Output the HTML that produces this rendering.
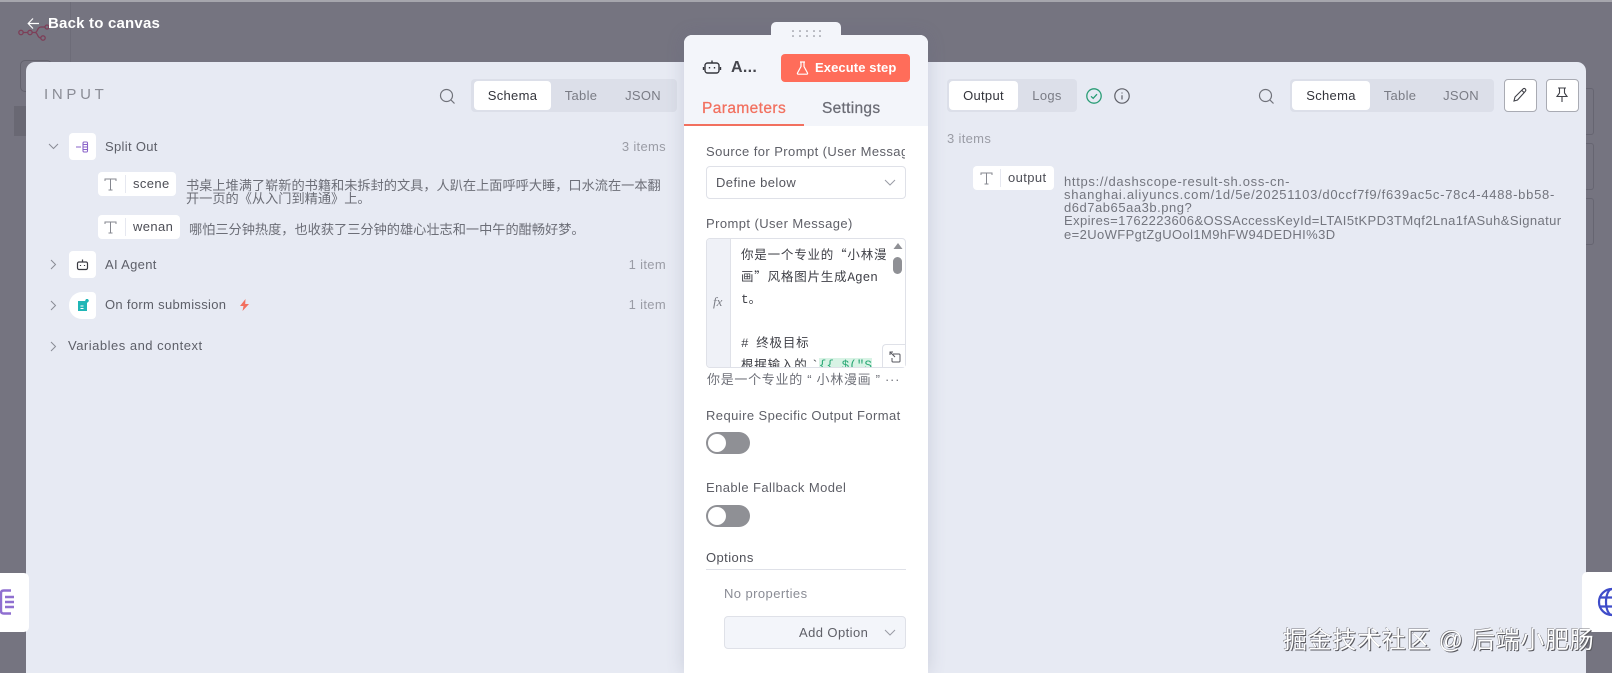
<!DOCTYPE html>
<html lang="zh">
<head>
<meta charset="utf-8">
<title>Back to canvas</title>
<style>
html,body{margin:0;padding:0;width:1612px;height:673px;overflow:hidden}
#r{width:1612px;height:673px;overflow:hidden;position:relative;background:#757480;font-family:"Liberation Sans","Noto Sans CJK SC",sans-serif;color:#6c6e77}
.a{position:absolute;white-space:nowrap}
.t{position:absolute;white-space:nowrap;line-height:16px;font-size:13px;letter-spacing:.32px}
svg{position:absolute;overflow:visible}
.seg{position:absolute;background:#dcdfe9;border-radius:4px;top:79px;height:33px}
.on{position:absolute;background:#fff;border-radius:4px;top:81px;height:29px;color:#33343b;font-size:13px;text-align:center;line-height:29px;letter-spacing:.3px}
.off{position:absolute;top:81px;height:29px;font-size:13px;text-align:center;line-height:29px;color:#7a7c85;letter-spacing:.3px}
.box{position:absolute;width:27px;height:27px;background:#fff;border-radius:4px}
.pill{position:absolute;background:#fff;border-radius:4px;height:24px}
.pill i{position:absolute;left:27px;top:3px;bottom:3px;width:1px;background:#e6e8f0}
.pill b{position:absolute;left:35px;top:4px;font-weight:normal;font-size:13px;letter-spacing:.4px;color:#4d4e56;line-height:16px}
.zh{position:absolute;font-size:13.2px;line-height:13px;color:#6c6e77;white-space:nowrap}
.mono{position:absolute;font-family:"Noto Sans CJK SC",monospace;font-size:12.5px;letter-spacing:.8px;line-height:22px;height:22px;color:#3f4047;white-space:nowrap}
.mono span{font-family:"Liberation Mono",monospace;letter-spacing:0;font-size:12.7px}
.lab{position:absolute;font-size:13px;line-height:16px;letter-spacing:.42px;color:#5f6068;white-space:nowrap}
.tog{position:absolute;left:706px;width:44px;height:22px;background:#8f9095;border-radius:11px}
.tog:after{content:"";position:absolute;left:2px;top:2px;width:18px;height:18px;border-radius:50%;background:#fff}
</style>
</head>
<body>
<div id="r">
<div class="a" style="left:0;top:0;width:1612px;height:2px;background:#a6a6ad"></div>
<div class="a" style="left:70px;top:2px;width:1px;height:60px;background:#6d6c78"></div>
<div class="a" style="left:20px;top:60px;width:30px;height:30px;border:1px solid #63626d;border-radius:5px"></div>
<div class="a" style="left:14px;top:106px;width:14px;height:30px;background:#696873"></div>
<div class="a" style="left:1586px;top:88px;width:7px;height:45px;border:1px solid #666571;border-left:0;border-radius:0 3px 3px 0"></div>
<div class="a" style="left:1586px;top:143px;width:7px;height:45px;border:1px solid #666571;border-left:0;border-radius:0 3px 3px 0"></div>
<div class="a" style="left:1586px;top:198px;width:7px;height:45px;border:1px solid #666571;border-left:0;border-radius:0 3px 3px 0"></div>

<svg style="left:18px;top:24px" width="32" height="18" viewBox="0 0 32 18" fill="none" stroke="#7d3f58" stroke-width="1.3"><circle cx="3" cy="8.5" r="2.2"/><circle cx="12" cy="8.5" r="2.2"/><circle cx="25" cy="14" r="2.2"/><circle cx="29" cy="3" r="2"/><path d="M5 8.5h5M14 8.500h3c3 0 2-5.500 6-5.500h4M17 8.500c3 0 2 5.500 6 5.500"/></svg>
<svg style="left:27px;top:17px" width="13" height="13" viewBox="0 0 13 13" fill="none" stroke="#fff" stroke-width="1.200"><path d="M12 6.500H1.500M6 1.500 1.200 6.500 6 11.500"/></svg>
<div class="t" style="left:48px;top:16px;color:#fff;font-weight:bold;font-size:15px;letter-spacing:.2px">Back to canvas</div>

<!-- main panel -->
<div class="a" style="left:26px;top:62px;width:1560px;height:611px;background:#e7eaf3;border-radius:9px 9px 0 0"></div>

<!-- input -->
<div class="t" style="left:44px;top:87px;font-size:15px;letter-spacing:3.700px;color:#8a8c95">INPUT</div>
<svg style="left:438px;top:87px" width="18" height="18" viewBox="0 0 18 18" fill="none" stroke="#70727a" stroke-width="1.200"><circle cx="8.500" cy="8.500" r="6"/><path d="M13 13l3.500 3.500"/></svg>
<div class="seg" style="left:471px;width:206px"></div>
<div class="on" style="left:474px;width:77px">Schema</div>
<div class="off" style="left:551px;width:60px">Table</div>
<div class="off" style="left:613px;width:60px">JSON</div>

<svg style="left:48px;top:143px" width="11" height="7" viewBox="0 0 11 7" fill="none" stroke="#8a8c95" stroke-width="1"><path d="M1 1l4.500 4.500L10 1"/></svg>
<div class="box" style="left:69px;top:133px"></div>
<svg style="left:76px;top:140px" width="14" height="14" viewBox="0 0 14 14" fill="none" stroke="#8a63c9" stroke-width="1.100"><path d="M0 7h5M7 7h5M8 2h2.500c1 0 1 .6 1 1.500V10.500c0 1 0 1.500-1 1.500H8c-.8 0-1-.6-1-1.500v-7C7 2.600 7.200 2 8 2zM7 4.500h5M7 9.500h5"/></svg>
<div class="t" style="left:105px;top:139px;color:#5d5f68">Split Out</div>
<div class="t" style="right:946px;top:139px;color:#9a9ca5">3 items</div>

<div class="pill" style="left:98px;top:172px;width:78px"><i></i><b>scene</b></div>
<svg style="left:104px;top:178px" width="13" height="13" viewBox="0 0 13 13" fill="none" stroke="#85878f" stroke-width="1"><path d="M1 3V1h11v2M6.500 1v11M4.500 12h4"/></svg>
<div class="zh" style="left:186px;top:179px">书桌上堆满了崭新的书籍和未拆封的文具，人趴在上面呼呼大睡，口水流在一本翻</div>
<div class="zh" style="left:186px;top:192px">开一页的《从入门到精通》上。</div>

<div class="pill" style="left:98px;top:215px;width:82px"><i></i><b>wenan</b></div>
<svg style="left:104px;top:221px" width="13" height="13" viewBox="0 0 13 13" fill="none" stroke="#85878f" stroke-width="1"><path d="M1 3V1h11v2M6.500 1v11M4.500 12h4"/></svg>
<div class="zh" style="left:189px;top:223px">哪怕三分钟热度，也收获了三分钟的雄心壮志和一中午的酣畅好梦。</div>

<svg style="left:50px;top:259px" width="7" height="11" viewBox="0 0 7 11" fill="none" stroke="#8a8c95" stroke-width="1"><path d="M1 1l4.500 4.500L1 10"/></svg>
<div class="box" style="left:69px;top:251px"></div>
<svg style="left:76px;top:258px" width="13" height="13" viewBox="0 0 13 13" fill="none" stroke="#3a3b42" stroke-width="1.200"><rect x="1.500" y="4" width="10" height="7.500" rx="1.500"/><path d="M6.500 4V1.500"/><path d="M4.500 7v1M8.500 7v1"/></svg>
<div class="t" style="left:105px;top:257px;color:#5d5f68">AI Agent</div>
<div class="t" style="right:946px;top:257px;color:#9a9ca5">1 item</div>

<svg style="left:50px;top:300px" width="7" height="11" viewBox="0 0 7 11" fill="none" stroke="#8a8c95" stroke-width="1"><path d="M1 1l4.500 4.500L1 10"/></svg>
<div class="a" style="left:69px;top:292px;width:27px;height:27px;background:#fff;border-radius:13px 4px 4px 13px"></div>
<svg style="left:77px;top:298px" width="13" height="14" viewBox="0 0 13 14"><path d="M1 3h7l1-2h2l1 2-2 2v8H1z" fill="#1fb6b6"/><path d="M3.500 8h3M3.500 10.500h3" stroke="#fff" stroke-width="1"/></svg>
<div class="t" style="left:105px;top:297px;color:#5d5f68">On form submission</div>
<svg style="left:239px;top:299px" width="11" height="12" viewBox="0 0 11 12"><path d="M6.500 0 1 7h3.500L3.500 12 10 5H6.200z" fill="#f2705f"/></svg>
<div class="t" style="right:946px;top:297px;color:#9a9ca5">1 item</div>

<svg style="left:50px;top:341px" width="7" height="11" viewBox="0 0 7 11" fill="none" stroke="#8a8c95" stroke-width="1"><path d="M1 1l4.500 4.500L1 10"/></svg>
<div class="t" style="left:68px;top:338px;color:#5d5f68;letter-spacing:.5px">Variables and context</div>

<!-- output -->
<div class="seg" style="left:947px;width:130px"></div>
<div class="on" style="left:949px;width:69px">Output</div>
<div class="off" style="left:1018px;width:58px">Logs</div>
<svg style="left:1085px;top:87px" width="18" height="18" viewBox="0 0 18 18" fill="none" stroke="#2a9d76" stroke-width="1.300"><circle cx="9" cy="9" r="7.200"/><path d="M6 9.300l2.200 2L12 7.200"/></svg>
<svg style="left:1113px;top:87px" width="18" height="18" viewBox="0 0 18 18" fill="none" stroke="#5f6068" stroke-width="1.200"><circle cx="9" cy="9" r="7.200"/><path d="M9 8.200v4.300M9 5.500v1"/></svg>
<svg style="left:1257px;top:87px" width="18" height="18" viewBox="0 0 18 18" fill="none" stroke="#70727a" stroke-width="1.200"><circle cx="8.500" cy="8.500" r="6"/><path d="M13 13l3.500 3.500"/></svg>
<div class="seg" style="left:1290px;width:204px"></div>
<div class="on" style="left:1292px;width:78px">Schema</div>
<div class="off" style="left:1370px;width:60px">Table</div>
<div class="off" style="left:1431px;width:60px">JSON</div>
<div class="a" style="left:1504px;top:79px;width:31px;height:31px;background:#fff;border:1px solid #a9abb3;border-radius:4px"></div>
<svg style="left:1512px;top:87px" width="16" height="16" viewBox="0 0 16 16" fill="none" stroke="#3f4047" stroke-width="1.100"><path d="M2 14l1-4L11 2c.8-.7 1.600-.7 2.300 0 .7.700.7 1.500 0 2.300L5.500 13z M10 3.500l2.500 2.500"/></svg>
<div class="a" style="left:1546px;top:79px;width:31px;height:31px;background:#fff;border:1px solid #a9abb3;border-radius:4px"></div>
<svg style="left:1555px;top:87px" width="14" height="16" viewBox="0 0 14 16" fill="none" stroke="#3f4047" stroke-width="1.100"><path d="M3 1h8M4.500 1v5L2 9.500h10L9.500 6V1M7 9.500V15"/></svg>
<div class="t" style="left:947px;top:131px;color:#9a9ca5">3 items</div>

<div class="pill" style="left:973px;top:166px;width:81px"><i></i><b>output</b></div>
<svg style="left:980px;top:172px" width="13" height="13" viewBox="0 0 13 13" fill="none" stroke="#85878f" stroke-width="1"><path d="M1 3h0V1h11v2M6.500 1v11M4.500 12h4"/></svg>
<div class="a" style="left:1064px;top:175px;font-size:13px;line-height:13px;color:#73757e"><span style="letter-spacing:.68px">https://dashscope-result-sh.oss-cn-</span><br><span style="letter-spacing:.72px">shanghai.aliyuncs.com/1d/5e/20251103/d0ccf7f9/f639ac5c-78c4-4488-bb58-</span><br><span style="letter-spacing:.53px">d6d7ab65aa3b.png?</span><br><span style="letter-spacing:.4px">Expires=1762223606&amp;OSSAccessKeyId=LTAI5tKPD3TMqf2Lna1fASuh&amp;Signatur</span><br><span style="letter-spacing:.39px;position:relative;top:1px">e=2UoWFPgtZgUOol1M9hFW94DEDHI%3D</span></div>

<!-- center panel -->
<div class="a" style="left:684px;top:35px;width:244px;height:638px;background:#fff;border-radius:8px 8px 0 0;box-shadow:0 0 18px rgba(90,95,125,.2)"></div>
<div class="a" style="left:684px;top:35px;width:244px;height:91px;background:#f3f5fa;border-radius:8px 8px 0 0"></div>
<div class="a" style="left:771px;top:22px;width:70px;height:20px;background:#f3f5fa;border-radius:5px 5px 0 0"></div>
<svg style="left:792px;top:30px" width="29" height="7" viewBox="0 0 29 7" fill="#7a7c85"><circle cx="1" cy="1" r=".8"/><circle cx="8" cy="1" r=".8"/><circle cx="15" cy="1" r=".8"/><circle cx="22" cy="1" r=".8"/><circle cx="28" cy="1" r=".8"/><circle cx="1" cy="6" r=".8"/><circle cx="8" cy="6" r=".8"/><circle cx="15" cy="6" r=".8"/><circle cx="22" cy="6" r=".8"/><circle cx="28" cy="6" r=".8"/></svg>
<svg style="left:703px;top:59px" width="18" height="15" viewBox="0 0 18 15" fill="none" stroke="#35363d" stroke-width="1.400"><rect x="2" y="4" width="14" height="10" rx="2.500"/><path d="M9 4V1.500"/><path d="M6.500 8v1.500M11.500 8v1.500M.5 8v3M17.500 8v3"/></svg>
<div class="t" style="left:731px;top:59px;font-size:16px;font-weight:bold;color:#45464d;letter-spacing:.3px;line-height:18px">A...</div>
<div class="a" style="left:781px;top:54px;width:129px;height:28px;background:#ff6d5a;border-radius:4px"></div>
<svg style="left:796px;top:61px" width="13" height="14" viewBox="0 0 13 14" fill="none" stroke="#fff" stroke-width="1.200"><path d="M4 1h5M5 1v4.500L1.500 12c-.3.700 0 1.200.7 1.200h8.600c.7 0 1-.5.700-1.200L8 5.500V1"/></svg>
<div class="t" style="left:815px;top:60px;color:#fff;font-weight:bold;font-size:13px;letter-spacing:.1px">Execute step</div>
<div class="t" style="left:702px;top:100px;font-size:15.500px;letter-spacing:.4px;line-height:18px;color:#f2705f;-webkit-text-stroke:.25px #f2705f">Parameters</div>
<div class="t" style="left:822px;top:100px;font-size:15.500px;letter-spacing:.3px;line-height:18px;color:#6b6c75;-webkit-text-stroke:.25px #6b6c75">Settings</div>
<div class="a" style="left:684px;top:124px;width:120px;height:2px;background:#f2705f"></div>

<div class="a" style="left:706px;top:144px;width:199px;height:16px;overflow:hidden"><div class="lab" style="left:0;top:0">Source for Prompt (User Message)</div></div>
<div class="a" style="left:706px;top:166px;width:198px;height:31px;border:1px solid #dfe1e8;border-radius:4px;background:#fff"></div>
<div class="lab" style="left:716px;top:175px;color:#55565e">Define below</div>
<svg style="left:884px;top:179px" width="12" height="7" viewBox="0 0 12 7" fill="none" stroke="#9a9ca5" stroke-width="1"><path d="M1 1l5 5 5-5"/></svg>
<div class="lab" style="left:706px;top:216px">Prompt (User Message)</div>

<div class="a" style="left:706px;top:238px;width:198px;height:128px;border:1px solid #dfe1e8;border-radius:4px;background:#fff;overflow:hidden">
<div class="a" style="left:0;top:0;width:23px;height:128px;background:#eff1f7;border-right:1px solid #dfe1e8"></div>
</div>
<div class="a" style="left:713px;top:294px;font-family:'Liberation Serif',serif;font-style:italic;font-size:13px;line-height:16px;color:#7a7c85">fx</div>
<div class="a" style="left:741px;top:243px;width:145px;height:124px;overflow:hidden">
<div class="mono" style="left:0;top:0">你是一个专业的“小林漫</div>
<div class="mono" style="left:0;top:22px">画”风格图片生成<span>Agen</span></div>
<div class="mono" style="left:0;top:44px"><span>t</span>。</div>
<div class="mono" style="left:0;top:88px"><span># </span>终极目标</div>
<div class="mono" style="left:0;top:110px">根据输入的 <span>`</span><span style="background:#d8f3e5;color:#2aa876">{{ $("S</span></div>
</div>
<svg style="left:893px;top:243px" width="10" height="7" viewBox="0 0 10 7"><path d="M5 0l4.500 6H.5z" fill="#8f9095"/></svg>
<div class="a" style="left:893px;top:257px;width:9px;height:17px;background:#8f9095;border-radius:4.500px"></div>
<div class="a" style="left:882px;top:344px;width:23px;height:23px;background:#fff;border:1px solid #dfe1e8;border-bottom:0;border-right:0;border-radius:4px 0 0 0;box-sizing:border-box"></div>
<svg style="left:889px;top:351px" width="12" height="12" viewBox="0 0 12 12" fill="none" stroke="#55565e" stroke-width="1"><path d="M1 4V1h3M1 1l5 5M4 3h6c.6 0 1 .4 1 1v6c0 .6-.4 1-1 1H4c-.6 0-1-.4-1-1V7"/></svg>
<div class="a" style="left:707px;top:372px;font-size:13px;line-height:16px;letter-spacing:.7px;color:#6f7179">你是一个专业的 “ 小林漫画 ” ···</div>

<div class="lab" style="left:706px;top:408px">Require Specific Output Format</div>
<div class="tog" style="top:432px"></div>
<div class="lab" style="left:706px;top:480px">Enable Fallback Model</div>
<div class="tog" style="top:505px"></div>
<div class="lab" style="left:706px;top:550px;color:#4f5058">Options</div>
<div class="a" style="left:706px;top:569px;width:200px;height:1px;background:#dfe1e8"></div>
<div class="lab" style="left:724px;top:586px;color:#8a8c95">No properties</div>
<div class="a" style="left:724px;top:616px;width:180px;height:31px;background:#f3f5fa;border:1px solid #dfe1e8;border-radius:4px"></div>
<div class="lab" style="left:799px;top:625px;color:#5f6068">Add Option</div>
<svg style="left:884px;top:629px" width="12" height="7" viewBox="0 0 12 7" fill="none" stroke="#9a9ca5" stroke-width="1"><path d="M1 1l5 5 5-5"/></svg>

<!-- side tabs -->
<div class="a" style="left:-8px;top:573px;width:37px;height:59px;background:#fff;border-radius:5px"></div>
<svg style="left:0;top:589px" width="14" height="26" viewBox="0 0 14 26" fill="none" stroke="#8f6fd0" stroke-width="2.400"><path d="M11 1.500H4C1 1.500 1 3 1 5v16c0 2 0 3.500 3 3.500h7M5 8h9M5 13h9M5 18h9"/></svg>
<div class="a" style="left:1582px;top:572px;width:30px;height:60px;background:#fff;border-radius:5px 0 0 5px"></div>
<svg style="left:1597px;top:588px;" width="15" height="28" viewBox="0 0 15 28" fill="none" stroke="#3f4cc9" stroke-width="2.200"><circle cx="15" cy="14" r="13"/><ellipse cx="15" cy="14" rx="6" ry="13"/><path d="M2 9.500h13M2 18.500h13"/></svg>

<div class="a" style="left:1283px;top:627px;font-size:24px;line-height:28px;color:#fff;letter-spacing:.7px;text-shadow:1px 1px 0 #5a5a60,-.5px -.5px 0 #77777d">掘金技术社区 @ 后端小肥肠</div>
</div>
</body>
</html>
